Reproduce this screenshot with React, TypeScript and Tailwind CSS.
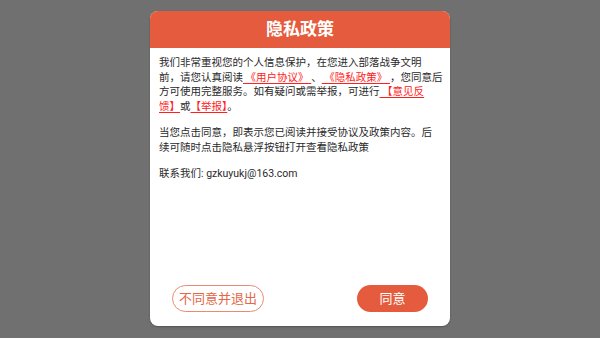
export default function App() {
  const link = "text-[#ff2020] underline decoration-1 underline-offset-[2px]";
  return (
    <div
      className="w-full h-[338px] bg-[#707070] flex justify-center pt-[11px]"
      style={{ fontFamily: "Roboto, 'Noto Sans CJK SC', sans-serif" }}
    >
      <div className="w-[300px] h-[315px] bg-white rounded-[8px] overflow-hidden flex flex-col shadow-[0_1px_2px_rgba(0,0,0,0.25)]">
        <div className="h-[37px] bg-[#e45c3d] flex items-center justify-center text-white text-[17px] font-bold">
          隐私政策
        </div>
        <div className="px-[9px] pt-[8px] text-[10.5px] leading-[14.5px] text-[#2a2a2a] whitespace-nowrap">
          <p>我们非常重视您的个人信息保护，在您进入部落战争文明</p>
          <p>
            前，请您认真阅读<span className={link}> 《用户协议》 </span>、<span className={link}> 《隐私政策》 </span>，您同意后
          </p>
          <p>
            方可使用完整服务。如有疑问或需举报，可进行<span className={link}> 【意见反</span>
          </p>
          <p>
            <span className={link}>馈】</span>或<span className={link}>【举报】</span>。
          </p>
          <p className="mt-[12px]">
            当您点击同意，即表示您已阅读并接受协议及政策内容。后
            <br />
            续可随时点击隐私悬浮按钮打开查看隐私政策
          </p>
          <p className="mt-[12px]">联系我们: gzkuyukj@163.com</p>
        </div>
        <div className="flex-1" />
        <div className="flex justify-between items-center px-[22px] pb-[14px]">
          <button className="h-[27px] w-[92px] rounded-full border border-[#ea8a72] text-[#e4674a] text-[13px] flex items-center justify-center">
            不同意并退出
          </button>
          <button className="h-[27px] w-[71px] rounded-full bg-[#e45c3d] text-white text-[13px] flex items-center justify-center">
            同意
          </button>
        </div>
      </div>
    </div>
  );
}
